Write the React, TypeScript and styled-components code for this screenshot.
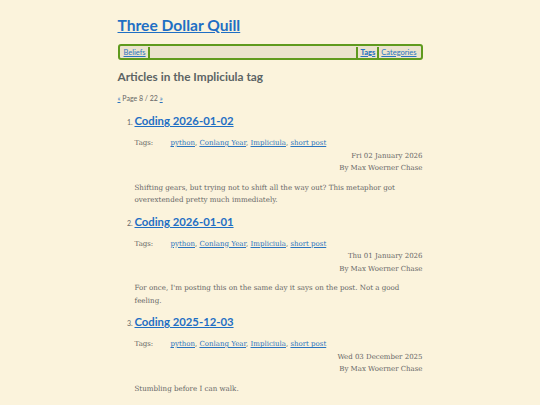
import styled, { createGlobalStyle } from "styled-components";

const GlobalStyle = createGlobalStyle`
  html, body {
    margin: 0;
    padding: 0;
    background: #fbf3dc;
  }
  body {
    font-family: "DejaVu Serif", serif;
  }
`;

const Page = styled.div`
  width: 305px;
  margin: 0 auto;
  padding-top: 14px;
  color: #5b5b5b;
`;

const SiteTitle = styled.a`
  display: block;
  font-family: Lato, sans-serif;
  font-weight: 700;
  font-size: 15.6px;
  line-height: 22px;
  color: #1f6fc4;
  text-decoration: underline;
`;

const Nav = styled.nav`
  display: flex;
  align-items: center;
  margin-top: 8px;
  height: 12px;
  padding: 0 2px;
  border: 2px solid #5f9a1e;
  border-radius: 3px;
  background: #ebe3cd;
  font-family: Lato, sans-serif;
  font-size: 7.5px;
`;

const NavLink = styled.a<{ $bold?: boolean }>`
  color: #2a74bf;
  text-decoration: underline;
  font-weight: ${(p) => (p.$bold ? 900 : 400)};
  padding: 0 2px;
`;

const NavBar = styled.span`
  width: 2px;
  height: 11px;
  background: #5f9a1e;
`;

const Spacer = styled.span`
  flex: 1;
`;

const Heading = styled.h2`
  margin: 9px 0 0;
  font-family: Lato, sans-serif;
  font-weight: 700;
  font-size: 11.8px;
  line-height: 16px;
  color: #5c6464;
`;

const Pager = styled.p`
  margin: 9px 0 0;
  font-family: Lato, sans-serif;
  font-size: 7px;
  color: #666;
  a {
    color: #2a74bf;
  }
`;

const List = styled.ol`
  margin: 10px 0 0;
  padding-left: 17px;
  font-size: 7px;
  font-family: Lato, sans-serif;
  color: #666;
`;

const Item = styled.li`
  margin-bottom: 6px;
`;

const ItemTitle = styled.a`
  font-family: Lato, sans-serif;
  font-weight: 700;
  font-size: 11.3px;
  line-height: 18px;
  color: #1f6fc4;
  text-decoration: underline;
`;

const Meta = styled.div`
  margin-top: 7px;
  font-family: "DejaVu Serif", serif;
  font-size: 7px;
  line-height: 12.5px;
  color: #666;
`;

const TagsRow = styled.div`
  display: flex;
`;

const TagsLabel = styled.span`
  width: 36px;
`;

const TagLink = styled.a`
  color: #2a74bf;
  text-decoration: underline;
`;

const RightLine = styled.div`
  text-align: right;
`;

const Summary = styled.p`
  margin: 7px 0 0;
  font-family: "DejaVu Serif", serif;
  font-size: 7.1px;
  line-height: 12.5px;
  color: #666;
`;

const articles = [
  {
    title: "Coding 2026-01-02",
    date: "Fri 02 January 2026",
    summary:
      "Shifting gears, but trying not to shift all the way out? This metaphor got overextended pretty much immediately.",
  },
  {
    title: "Coding 2026-01-01",
    date: "Thu 01 January 2026",
    summary:
      "For once, I'm posting this on the same day it says on the post. Not a good feeling.",
  },
  {
    title: "Coding 2025-12-03",
    date: "Wed 03 December 2025",
    summary: "Stumbling before I can walk.",
  },
];

const tags = ["python", "Conlang Year", "Impliciula", "short post"];

export default function App() {
  return (
    <>
      <GlobalStyle />
      <Page>
        <SiteTitle href="#">Three Dollar Quill</SiteTitle>
        <Nav>
          <NavLink href="#">Beliefs</NavLink>
          <NavBar />
          <Spacer />
          <NavBar />
          <NavLink href="#" $bold>
            Tags
          </NavLink>
          <NavBar />
          <NavLink href="#">Categories</NavLink>
        </Nav>
        <Heading>Articles in the Impliciula tag</Heading>
        <Pager>
          <a href="#">«</a> Page 8 / 22 <a href="#">»</a>
        </Pager>
        <List>
          {articles.map((a) => (
            <Item key={a.title}>
              <ItemTitle href="#">{a.title}</ItemTitle>
              <Meta>
                <TagsRow>
                  <TagsLabel>Tags:</TagsLabel>
                  <span>
                    {tags.map((t, i) => (
                      <span key={t}>
                        <TagLink href="#">{t}</TagLink>
                        {i < tags.length - 1 ? ", " : ""}
                      </span>
                    ))}
                  </span>
                </TagsRow>
                <RightLine>{a.date}</RightLine>
                <RightLine>By Max Woerner Chase</RightLine>
              </Meta>
              <Summary>{a.summary}</Summary>
            </Item>
          ))}
        </List>
      </Page>
    </>
  );
}
